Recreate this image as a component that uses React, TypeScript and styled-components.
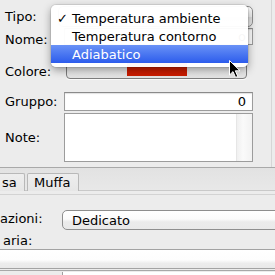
import React from 'react';
import styled, { createGlobalStyle } from 'styled-components';

const GlobalStyle = createGlobalStyle`
  html, body {
    margin: 0;
    padding: 0;
    background: #ececec;
    overflow: hidden;
  }
  body {
    font-family: 'DejaVu Sans', 'Liberation Sans', sans-serif;
    font-size: 13px;
    color: #000;
  }
`;

const Window = styled.div`
  position: relative;
  width: 275px;
  height: 275px;
  overflow: hidden;
  background: #ececec;
`;

const Form = styled.section`
  display: flex;
  flex-direction: column;
  padding: 6px 18px 0 0;
  height: 161px;
  border-right: 1px solid #d6d6d6;
  margin-right: 3px;
`;

const Row = styled.div<{ $h: number; $gap?: number }>`
  display: flex;
  align-items: center;
  height: ${(p) => p.$h}px;
  margin-top: ${(p) => p.$gap ?? 0}px;
`;

const Label = styled.span<{ $shift?: number; $w?: number; $pad?: number }>`
  flex: 0 0 ${(p) => p.$w ?? 64}px;
  padding-left: ${(p) => p.$pad ?? 5}px;
  box-sizing: border-box;
  position: relative;
  top: ${(p) => p.$shift ?? 0}px;
  white-space: nowrap;
`;

const PopupButton = styled.div`
  flex: 1;
  height: 100%;
  margin-left: -6px;
  border: 1px solid #8e8e8e;
  border-radius: 5px;
  background: linear-gradient(#fefefe, #f0f0f0 50%, #dedede 51%, #ececec);
  box-sizing: border-box;
`;

const TextField = styled.div<{ $align?: string }>`
  flex: 1;
  height: 100%;
  border: 1px solid #9c9c9c;
  border-top-color: #8a8a8a;
  background: #fff;
  box-sizing: border-box;
  display: flex;
  align-items: center;
  justify-content: ${(p) => p.$align ?? 'flex-start'};
  padding: 0 6px;
  box-shadow: inset 0 1px 1px rgba(0, 0, 0, 0.12);
`;

const ColorWell = styled.div`
  flex: 0 0 181px;
  margin-left: 2px;
  height: 100%;
  border: 1px solid #7d7d7d;
  border-radius: 4px;
  background: linear-gradient(#f4f4f4, #e4e4e4);
  box-sizing: border-box;
  display: flex;
  align-items: center;
  justify-content: center;
  box-shadow: 0 1px 0 rgba(255, 255, 255, 0.8);
`;

const Swatch = styled.div<{ $color: string }>`
  width: 60px;
  height: 13px;
  margin-top: 2px;
  background: ${(p) => p.$color};
`;

const NoteArea = styled.div`
  flex: 1;
  height: 100%;
  border: 1px solid #9c9c9c;
  background: #fff;
  box-sizing: border-box;
  display: flex;
  justify-content: flex-end;
`;

const Scroller = styled.div`
  width: 15px;
  background: linear-gradient(90deg, #f0f0f0, #fafafa 40%, #f2f2f2);
  border-left: 1px solid #e6e6e6;
`;

const TabStrip = styled.div`
  display: flex;
  align-items: flex-end;
  gap: 2px;
  height: 22px;
  border-top: 1px solid #a9a9a9;
  background: linear-gradient(#e2e2e2, #e8e8e8);
  border-bottom: 1px solid #c9c9c9;
`;

const Tab = styled.div<{ $w: number; $pad?: number; $offset?: number }>`
  width: ${(p) => p.$w}px;
  height: 18px;
  margin-left: ${(p) => p.$offset ?? 0}px;
  margin-bottom: -1px;
  border: 1px solid #b8b8b8;
  border-bottom: none;
  border-radius: 2px 2px 0 0;
  background: linear-gradient(#eeeeee, #e6e6e6);
  box-sizing: border-box;
  display: flex;
  align-items: center;
  padding-left: ${(p) => p.$pad ?? 6}px;
  white-space: nowrap;
`;

const Pane = styled.section`
  display: flex;
  flex-direction: column;
  border-top: 1px solid #d3d3d3;
  margin-top: 3px;
`;

const WidePopup = styled.div`
  flex: 1;
  height: 100%;
  margin-right: -20px;
  border: 1px solid #8e8e8e;
  border-radius: 5px;
  background: linear-gradient(#ffffff, #fbfbfb 45%, #ebebeb 60%, #e9e9e9);
  box-sizing: border-box;
  display: flex;
  align-items: center;
  padding-left: 9px;
`;

const Band = styled.div`
  height: 18px;
  margin-top: 2px;
  border-top: 1px solid #a3a3a3;
  border-bottom: 1px solid #a3a3a3;
  background: linear-gradient(#ffffff, #fdfdfd 55%, #ececec 75%, #e9e9e9);
`;

const BottomRow = styled.div`
  display: flex;
  margin-top: 1px;
  height: 10px;
  border-top: 1px solid #a8a8a8;
`;

const BottomBox = styled.div`
  margin-left: 62px;
  flex: 1;
  border-left: 1px solid #a0a0a0;
  background: #fff;
  margin-top: 1px;
`;

const Menu = styled.ul`
  position: absolute;
  left: 51px;
  top: 5px;
  width: 197px;
  margin: 0;
  padding: 4px 0 4px;
  list-style: none;
  background: rgba(255, 255, 255, 0.97);
  border-radius: 5px;
  box-shadow: 0 3px 9px rgba(0, 0, 0, 0.38), 0 0 0 1px rgba(0, 0, 0, 0.08);
`;

const MenuItem = styled.li<{ $active?: boolean }>`
  height: 18px;
  display: flex;
  align-items: center;
  padding-left: 6px;
  color: ${(p) => (p.$active ? '#fff' : '#000')};
  background: ${(p) =>
    p.$active ? 'linear-gradient(#6a92f6, #4a77f1 50%, #2d5cec)' : 'transparent'};
  white-space: nowrap;
`;

const Check = styled.span`
  display: inline-block;
  width: 15px;
  font-size: 13px;
`;

const Cursor = styled.svg`
  position: absolute;
  left: 228px;
  top: 59px;
`;

const menuItems = ['Temperatura ambiente', 'Temperatura contorno', 'Adiabatico'];

const App = (): React.ReactElement => {
  return (
    <Window>
      <GlobalStyle />
      <Form>
        <Row $h={21}>
          <Label>Tipo:</Label>
          <PopupButton />
        </Row>
        <Row $h={17} $gap={1}>
          <Label $shift={3}>Nome:</Label>
          <TextField $align='flex-end'>o</TextField>
        </Row>
        <Row $h={22} $gap={12}>
          <Label $shift={3}>Colore:</Label>
          <ColorWell>
            <Swatch $color='#cc1c00' />
          </ColorWell>
        </Row>
        <Row $h={19} $gap={13}>
          <Label>Gruppo:</Label>
          <TextField $align='flex-end'>0</TextField>
        </Row>
        <Row $h={49} $gap={2}>
          <Label>Note:</Label>
          <NoteArea>
            <Scroller />
          </NoteArea>
        </Row>
      </Form>
      <TabStrip>
        <Tab $w={27} $pad={3} $offset={-2}>sa</Tab>
        <Tab $w={52}>Muffa</Tab>
      </TabStrip>
      <Pane>
        <Row $h={20} $gap={15}>
          <Label $w={62} $pad={0} $shift={-2}>azioni:</Label>
          <WidePopup>Dedicato</WidePopup>
        </Row>
        <Row $h={16} $gap={1}>
          <Label $pad={3} $shift={1}>aria:</Label>
        </Row>
        <Band />
        <BottomRow>
          <BottomBox />
        </BottomRow>
      </Pane>
      <Menu>
        {menuItems.map((item, i) => (
          <MenuItem key={item} $active={i === 2}>
            <Check>{i === 0 ? '✓' : ''}</Check>
            {item}
          </MenuItem>
        ))}
      </Menu>
      <Cursor width='14' height='20' viewBox='0 0 14 20'>
        <path
          d='M1.5 1.5 L1.5 16 L5 12.6 L7.6 18.4 L9.8 17.4 L7.3 11.8 L12 11.8 Z'
          fill='#000'
          stroke='#fff'
          strokeWidth='1'
          strokeLinejoin='round'
        />
      </Cursor>
    </Window>
  );
};

export default App;
